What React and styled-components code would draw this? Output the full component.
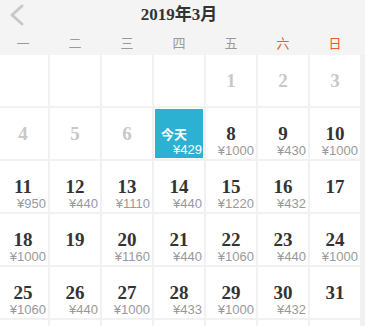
import React from 'react';
import styled, {createGlobalStyle} from 'styled-components';

const GlobalStyle = createGlobalStyle`
    html, body {
        margin: 0;
        padding: 0;
        background: #fff;
    }
    body {
        font-family: "Noto Sans", "Noto Sans CJK SC", sans-serif;
        overflow: hidden;
    }
`

const Page = styled.div`
    width: 365px;
    height: 326px;
    overflow: hidden;
    background: #f3f3f3;
`

const Header = styled.div`
    background: #f4f4f4;
    height: 55px;
`

const TitleBar = styled.div`
    display: flex;
    align-items: center;
    height: 29px;
`

const BackButton = styled.div`
    width: 34px;
    padding-left: 9px;
    box-sizing: border-box;
    display: flex;
    align-items: center;
    cursor: pointer;
`

const Title = styled.h1`
    flex: 1;
    margin: 0;
    text-align: center;
    font-size: 17px;
    line-height: 29px;
    font-weight: bold;
    color: #333;
    font-family: "Liberation Serif", "Noto Sans CJK SC", serif;
`

const Spacer = styled.div`
    width: 41px;
`

const WeekRow = styled.div`
    display: grid;
    grid-template-columns: repeat(7, 50px);
    column-gap: 2px;
    margin-left: -2px;
    height: 26px;
    align-items: center;
`

const WeekLabel = styled.span`
    text-align: center;
    font-size: 13px;
    font-family: "Noto Sans CJK SC", sans-serif;
    color: ${p => p.weekend ? '#f0592a' : '#999'};
`

const Grid = styled.div`
    display: grid;
    grid-template-columns: repeat(7, 50px);
    grid-auto-rows: 51px;
    gap: 2px;
    margin-left: -2px;
    background: #f1f1f1;
`

const Cell = styled.div`
    background: #fff;
    display: flex;
    flex-direction: column;
    align-items: center;
    padding-top: 16px;
    box-sizing: border-box;
`

const DayNum = styled.span`
    font-family: "Liberation Serif", serif;
    font-weight: bold;
    font-size: 19px;
    line-height: 19px;
    color: ${p => p.past ? '#c8c8c8' : '#333'};
`

const Price = styled.span`
    align-self: stretch;
    text-align: right;
    padding-right: 2px;
    margin-top: 1px;
    font-family: "Liberation Sans", sans-serif;
    font-size: 13px;
    line-height: 14px;
    color: #999;
`

const TodayCell = styled.div`
    background: #fff;
    padding: 1px;
    box-sizing: border-box;
    display: flex;
`

const TodayBox = styled.div`
    flex: 1;
    background: #2db1d3;
    display: flex;
    flex-direction: column;
    align-items: center;
    padding-top: 15px;
    box-sizing: border-box;
`

const TodayLabel = styled.span`
    font-family: "Noto Sans CJK SC", sans-serif;
    font-weight: bold;
    font-size: 13px;
    line-height: 19px;
    color: #fff;
    margin-right: 10px;
`

const TodayPrice = styled(Price)`
    color: #fff;
    padding-right: 1px;
    margin-top: 0;
`

const weekdays = ['一', '二', '三', '四', '五', '六', '日'];

const prices = {
    7: 429, 8: 1000, 9: 430, 10: 1000,
    11: 950, 12: 440, 13: 1110, 14: 440, 15: 1220, 16: 432,
    18: 1000, 20: 1160, 21: 440, 22: 1060, 23: 440, 24: 1000,
    25: 1060, 26: 440, 27: 1000, 28: 433, 29: 1000, 30: 432,
};

const TODAY = 7;

function buildDays() {
    const days = [];
    for (let i = 0; i < 4; i++) days.push(null);
    for (let d = 1; d <= 31; d++) days.push(d);
    while (days.length < 42) days.push(null);
    return days;
}

function Chevron() {
    return (
        <svg width="16" height="24" viewBox="0 0 16 24">
            <polyline points="13,3 3,12 13,21" fill="none" stroke="#c8c8c8" strokeWidth="3" strokeLinecap="round" strokeLinejoin="round" />
        </svg>
    );
}

function Day({day}) {
    if (day === null) return <Cell />;
    if (day === TODAY) {
        return (
            <TodayCell>
                <TodayBox>
                    <TodayLabel>今天</TodayLabel>
                    <TodayPrice>¥{prices[day]}</TodayPrice>
                </TodayBox>
            </TodayCell>
        );
    }
    return (
        <Cell>
            <DayNum past={day < TODAY}>{day}</DayNum>
            {prices[day] && <Price>¥{prices[day]}</Price>}
        </Cell>
    );
}

export default function App() {
    return (
        <Page>
            <GlobalStyle />
            <Header>
                <TitleBar>
                    <BackButton><Chevron /></BackButton>
                    <Title>2019年3月</Title>
                    <Spacer />
                </TitleBar>
                <WeekRow>
                    {weekdays.map((w, i) => (
                        <WeekLabel key={w} weekend={i >= 5}>{w}</WeekLabel>
                    ))}
                </WeekRow>
            </Header>
            <Grid>
                {buildDays().map((d, i) => <Day key={i} day={d} />)}
            </Grid>
        </Page>
    );
}
